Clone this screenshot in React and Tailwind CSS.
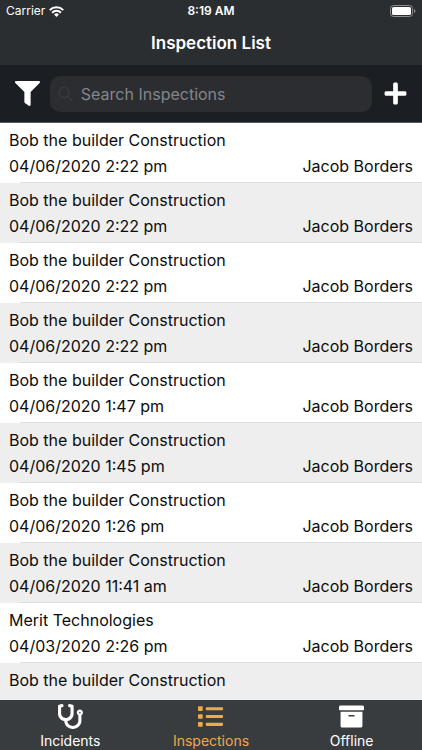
import { FaFilter, FaPlus, FaStethoscope, FaList, FaArchive } from "react-icons/fa";

const inspections = [
  { company: "Bob the builder Construction", date: "04/06/2020 2:22 pm", inspector: "Jacob Borders" },
  { company: "Bob the builder Construction", date: "04/06/2020 2:22 pm", inspector: "Jacob Borders" },
  { company: "Bob the builder Construction", date: "04/06/2020 2:22 pm", inspector: "Jacob Borders" },
  { company: "Bob the builder Construction", date: "04/06/2020 2:22 pm", inspector: "Jacob Borders" },
  { company: "Bob the builder Construction", date: "04/06/2020 1:47 pm", inspector: "Jacob Borders" },
  { company: "Bob the builder Construction", date: "04/06/2020 1:45 pm", inspector: "Jacob Borders" },
  { company: "Bob the builder Construction", date: "04/06/2020 1:26 pm", inspector: "Jacob Borders" },
  { company: "Bob the builder Construction", date: "04/06/2020 11:41 am", inspector: "Jacob Borders" },
  { company: "Merit Technologies", date: "04/03/2020 2:26 pm", inspector: "Jacob Borders" },
  { company: "Bob the builder Construction" },
];

const tabs = [
  { label: "Incidents", Icon: FaStethoscope },
  { label: "Inspections", Icon: FaList, active: true },
  { label: "Offline", Icon: FaArchive },
];

function WifiIcon() {
  return (
    <svg width="15" height="11" viewBox="0 0 15 11" fill="none" stroke="currentColor" strokeWidth="2" aria-hidden="true">
      <path d="M0.7 4.100a9.700 9.700 0 0 1 13.600 0" />
      <path d="M3.100 6.700a6.200 6.200 0 0 1 8.800 0" />
      <path d="M7.500 11L5.100 8.500a3.400 3.400 0 0 1 4.800 0z" fill="currentColor" stroke="none" />
    </svg>
  );
}

function BatteryIcon() {
  return (
    <svg width="26" height="12" viewBox="0 0 26 12" aria-hidden="true">
      <rect x="0.5" y="0.5" width="22" height="11" rx="3" fill="none" stroke="#8b8d8f" />
      <rect x="2" y="2" width="19" height="8" rx="1.6" fill="#fff" />
      <path d="M24 4v4c.9-.4 1.3-1.1 1.3-2S24.900 4.400 24 4z" fill="#8b8d8f" />
    </svg>
  );
}

function StatusBar() {
  return (
    <div className="grid h-[22px] grid-cols-3 items-center px-[6px] text-xs">
      <div className="flex items-center gap-1">
        <span>Carrier</span>
        <WifiIcon />
      </div>
      <span className="text-center font-semibold">8:19 AM</span>
      <div className="flex justify-end">
        <BatteryIcon />
      </div>
    </div>
  );
}

function SearchBar() {
  return (
    <div className="flex h-[58px] items-center border-b border-[#55585b] bg-[#1b1e22] px-3">
      <button type="button" aria-label="Filter" className="flex w-[30px] justify-center">
        <FaFilter size={25} />
      </button>
      <label className="ml-2 flex h-9 flex-1 items-center gap-2 rounded-[10px] bg-[#2b2d31] pl-2">
        <svg width="16" height="16" viewBox="0 0 16 16" fill="none" stroke="#3a3c40" strokeWidth="1.3" strokeLinecap="round" aria-hidden="true">
          <circle cx="6.500" cy="6.500" r="5.500" />
          <path d="M10.600 10.600L15.300 15.300" />
        </svg>
        <input
          type="search"
          aria-label="Search Inspections"
          placeholder="Search Inspections"
          className="h-full w-full min-w-0 bg-transparent text-base outline-none placeholder:text-[#84868a]"
        />
      </label>
      <button type="button" aria-label="Add inspection" className="ml-2 flex w-[30px] justify-center">
        <FaPlus size={25} />
      </button>
    </div>
  );
}

function InspectionRow({ company, date, inspector }) {
  return (
    <li className="h-[60px] odd:bg-white even:bg-[#eeeeee]">
      <div className="h-[59px] px-[9px] pt-1">
        <p>{company}</p>
        <div className="flex justify-between">
          <span>{date}</span>
          <span>{inspector}</span>
        </div>
      </div>
      <div className="ml-5 h-px bg-[#dedede]" />
    </li>
  );
}

export default function App() {
  return (
    <div className="flex h-screen flex-col overflow-hidden bg-white font-['Inter','Liberation_Sans',sans-serif] text-white">
      <header className="shrink-0 bg-[#2b2e31]">
        <StatusBar />
        <h1 className="flex h-[43px] items-center justify-center text-[17px] font-semibold">Inspection List</h1>
        <SearchBar />
      </header>
      <main className="min-h-0 flex-1 overflow-hidden">
        <ul className="text-base leading-[26px] text-[#0c0c0c]">
          {inspections.map((item, i) => (
            <InspectionRow key={i} {...item} />
          ))}
        </ul>
      </main>
      <nav className="grid h-[50px] shrink-0 grid-cols-3 bg-[#393c3f] text-sm">
        {tabs.map(({ label, Icon, active }) => (
          <a
            key={label}
            href={"#" + label.toLowerCase()}
            aria-current={active ? "page" : undefined}
            className={"flex flex-col items-center gap-px pt-1 leading-[22px] " + (active ? "text-[#f0a84a]" : "text-white")}
          >
            <Icon size={25} />
            <span>{label}</span>
          </a>
        ))}
      </nav>
    </div>
  );
}
